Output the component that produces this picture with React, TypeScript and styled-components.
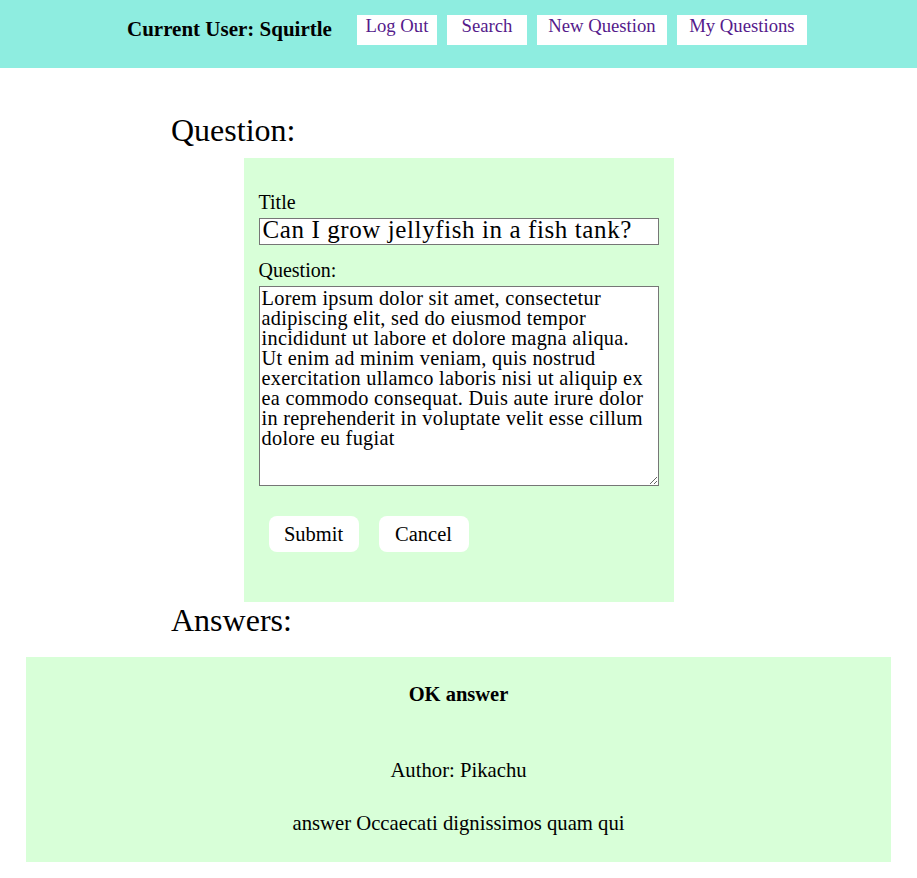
import React from "react";
import styled, { createGlobalStyle } from "styled-components";

const Global = createGlobalStyle`
  html, body { margin: 0; padding: 0; background: #ffffff; }
  body { font-family: "Liberation Serif", "DejaVu Serif", serif; color: #000; }
  * { box-sizing: border-box; }
`;

const Header = styled.header`
  height: 68px;
  background: #8eede0;
  display: flex;
  align-items: flex-start;
  padding: 15px 0 0 127px;
`;

const UserName = styled.div`
  font-weight: bold;
  font-size: 21px;
  line-height: 30px;
  margin-top: -1px;
  margin-right: 25px;
`;

const NavList = styled.nav`
  display: flex;
  gap: 10px;
`;

const NavLink = styled.a<{ $w: number }>`
  width: ${(p) => p.$w}px;
  height: 30px;
  background: #ffffff;
  color: #551a8b;
  font-size: 18.7px;
  line-height: 22px;
  text-align: center;
  text-decoration: none;
`;

const Main = styled.main`
  display: flex;
  flex-direction: column;
  padding: 0 26px;
`;

const SectionTitle = styled.h2<{ $top: number }>`
  font-weight: normal;
  font-size: 32px;
  line-height: 36px;
  margin: ${(p) => p.$top}px 0 0 0;
  padding-left: 145px;
`;

const QuestionPanel = styled.form`
  align-self: center;
  width: 430px;
  height: 444px;
  margin-top: 10px;
  background: #d8ffd8;
  padding: 32px 15px 0 15px;
  display: flex;
  flex-direction: column;
`;

const FieldLabel = styled.label<{ $top?: number }>`
  font-size: 20px;
  line-height: 24px;
  display: block;
  margin-top: ${(p) => p.$top ?? 0}px;
`;

const TitleInput = styled.input`
  display: block;
  width: 400px;
  height: 27px;
  border: 1px solid #767676;
  padding: 0 3px 4px 3px;
  font-family: "Liberation Serif", serif;
  font-size: 25px;
  letter-spacing: 0.6px;
  color: #000;
  background: #fff;
  margin-top: 4px;
`;

const BodyArea = styled.textarea`
  display: block;
  width: 400px;
  height: 200px;
  border: 1px solid #767676;
  padding: 1px 7px 0 2px;
  font-family: "Liberation Serif", serif;
  font-size: 20.3px;
  letter-spacing: 0.3px;
  line-height: 20px;
  color: #000;
  background: #fff;
  resize: both;
  margin-top: 4px;
`;

const ButtonRow = styled.div`
  display: flex;
  gap: 20px;
  margin-top: 30px;
  padding-left: 10px;
`;

const PanelButton = styled.button`
  width: 90px;
  height: 36px;
  border: none;
  border-radius: 8px;
  background: #fff;
  font-family: "Liberation Serif", serif;
  font-size: 20.5px;
  color: #000;
  padding: 0;
`;

const AnswerCard = styled.section`
  background: #d8ffd8;
  height: 205px;
  margin-top: 19px;
  margin-bottom: 16px;
  display: flex;
  flex-direction: column;
  align-items: center;
  padding-top: 25px;
`;

const AnswerTitle = styled.div`
  font-weight: bold;
  font-size: 20.5px;
  line-height: 24px;
`;

const AnswerText = styled.div<{ $top: number }>`
  font-size: 20.7px;
  line-height: 24px;
  margin-top: ${(p) => p.$top}px;
`;

const lorem =
  "Lorem ipsum dolor sit amet, consectetur adipiscing elit, sed do eiusmod tempor incididunt ut labore et dolore magna aliqua. Ut enim ad minim veniam, quis nostrud exercitation ullamco laboris nisi ut aliquip ex ea commodo consequat. Duis aute irure dolor in reprehenderit in voluptate velit esse cillum dolore eu fugiat";

export default function App() {
  return (
    <>
      <Global />
      <Header>
        <UserName>Current User: Squirtle</UserName>
        <NavList>
          <NavLink $w={80} href="#">Log Out</NavLink>
          <NavLink $w={80} href="#">Search</NavLink>
          <NavLink $w={130} href="#">New Question</NavLink>
          <NavLink $w={130} href="#">My Questions</NavLink>
        </NavList>
      </Header>
      <Main>
        <SectionTitle $top={44}>Question:</SectionTitle>
        <QuestionPanel onSubmit={(e) => e.preventDefault()}>
          <FieldLabel>Title</FieldLabel>
          <TitleInput defaultValue="Can I grow jellyfish in a fish tank?" />
          <FieldLabel $top={13}>Question:</FieldLabel>
          <BodyArea defaultValue={lorem} />
          <ButtonRow>
            <PanelButton type="submit">Submit</PanelButton>
            <PanelButton type="button">Cancel</PanelButton>
          </ButtonRow>
        </QuestionPanel>
        <SectionTitle $top={0}>Answers:</SectionTitle>
        <AnswerCard>
          <AnswerTitle>OK answer</AnswerTitle>
          <AnswerText $top={52}>Author: Pikachu</AnswerText>
          <AnswerText $top={29}>answer Occaecati dignissimos quam qui</AnswerText>
        </AnswerCard>
      </Main>
    </>
  );
}
